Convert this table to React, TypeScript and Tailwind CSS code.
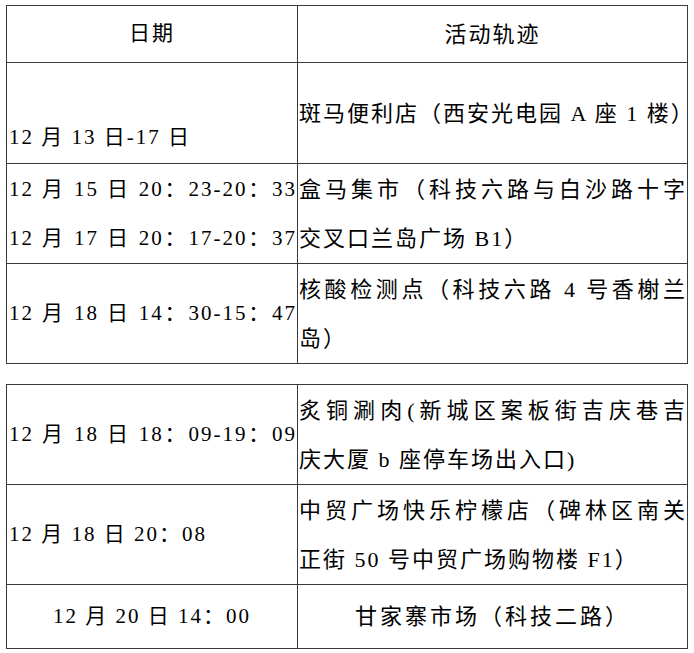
import React from 'react';

const font = "font-['Liberation_Serif','Noto_Sans_CJK_SC',serif]";

// one printed line inside a cell
const Line = ({ children, full }: { children: React.ReactNode; full?: boolean }) => (
  <div
    className={`h-[49px] leading-[49px] whitespace-nowrap ${full ? '[text-align-last:justify]' : ''}`}
  >
    {children}
  </div>
);

const Cell = ({ children, className = '' }: { children: React.ReactNode; className?: string }) => (
  <td className={`border border-[#3a3a3a] p-0 align-middle ${className}`}>{children}</td>
);

// left = date column, right = place column (slightly larger type in the scan)
const L = 'pl-[2px] text-[21px]';
const R = 'pl-[1px] text-[22px]';

export default function App() {
  return (
    <div className={`w-[694px] h-[653px] bg-white text-black tracking-[2px] ${font}`}>
      <div className="pt-[5px] pl-[6px]">
        {/* first sheet */}
        <table className="border-collapse table-fixed w-[681px]">
          <colgroup>
            <col className="w-[291px]" />
            <col className="w-[390px]" />
          </colgroup>
          <tbody>
            <tr className="h-[57px]">
              <Cell className="text-center text-[21px]">日期</Cell>
              <Cell className="text-center text-[22px]">活动轨迹</Cell>
            </tr>
            <tr className="h-[101px]">
              <Cell className={L}>
                <Line>&nbsp;</Line>
                <Line>12 月 13 日-17 日</Line>
              </Cell>
              <Cell className={R}>
                <Line full>斑马便利店（西安光电园 A 座 1 楼）</Line>
              </Cell>
            </tr>
            <tr className="h-[100px]">
              <Cell className={L}>
                <Line full>12 月 15 日 20：23-20：33</Line>
                <Line full>12 月 17 日 20：17-20：37</Line>
              </Cell>
              <Cell className={R}>
                <Line full>盒马集市（科技六路与白沙路十字</Line>
                <Line>交叉口兰岛广场 B1）</Line>
              </Cell>
            </tr>
            <tr className="h-[100px]">
              <Cell className={L}>
                <Line full>12 月 18 日 14：30-15：47</Line>
              </Cell>
              <Cell className={R}>
                <Line full>核酸检测点（科技六路 4 号香榭兰</Line>
                <Line>岛）</Line>
              </Cell>
            </tr>
          </tbody>
        </table>

        {/* second sheet */}
        <table className="mt-[20px] border-collapse table-fixed w-[681px]">
          <colgroup>
            <col className="w-[291px]" />
            <col className="w-[390px]" />
          </colgroup>
          <tbody>
            <tr className="h-[100px]">
              <Cell className={L}>
                <Line full>12 月 18 日 18：09-19：09</Line>
              </Cell>
              <Cell className={R}>
                <Line full>炙铜涮肉(新城区案板街吉庆巷吉</Line>
                <Line>庆大厦 b 座停车场出入口)</Line>
              </Cell>
            </tr>
            <tr className="h-[100px]">
              <Cell className={L}>
                <Line>12 月 18 日 20：08</Line>
              </Cell>
              <Cell className={R}>
                <Line full>中贸广场快乐柠檬店（碑林区南关</Line>
                <Line>正街 50 号中贸广场购物楼 F1）</Line>
              </Cell>
            </tr>
            <tr className="h-[64px]">
              <Cell className="text-center text-[21px]">
                <Line>12 月 20 日 14：00</Line>
              </Cell>
              <Cell className="text-center text-[22px] tracking-[3px]">
                <Line>甘家寨市场（科技二路）</Line>
              </Cell>
            </tr>
          </tbody>
        </table>
      </div>
    </div>
  );
}
